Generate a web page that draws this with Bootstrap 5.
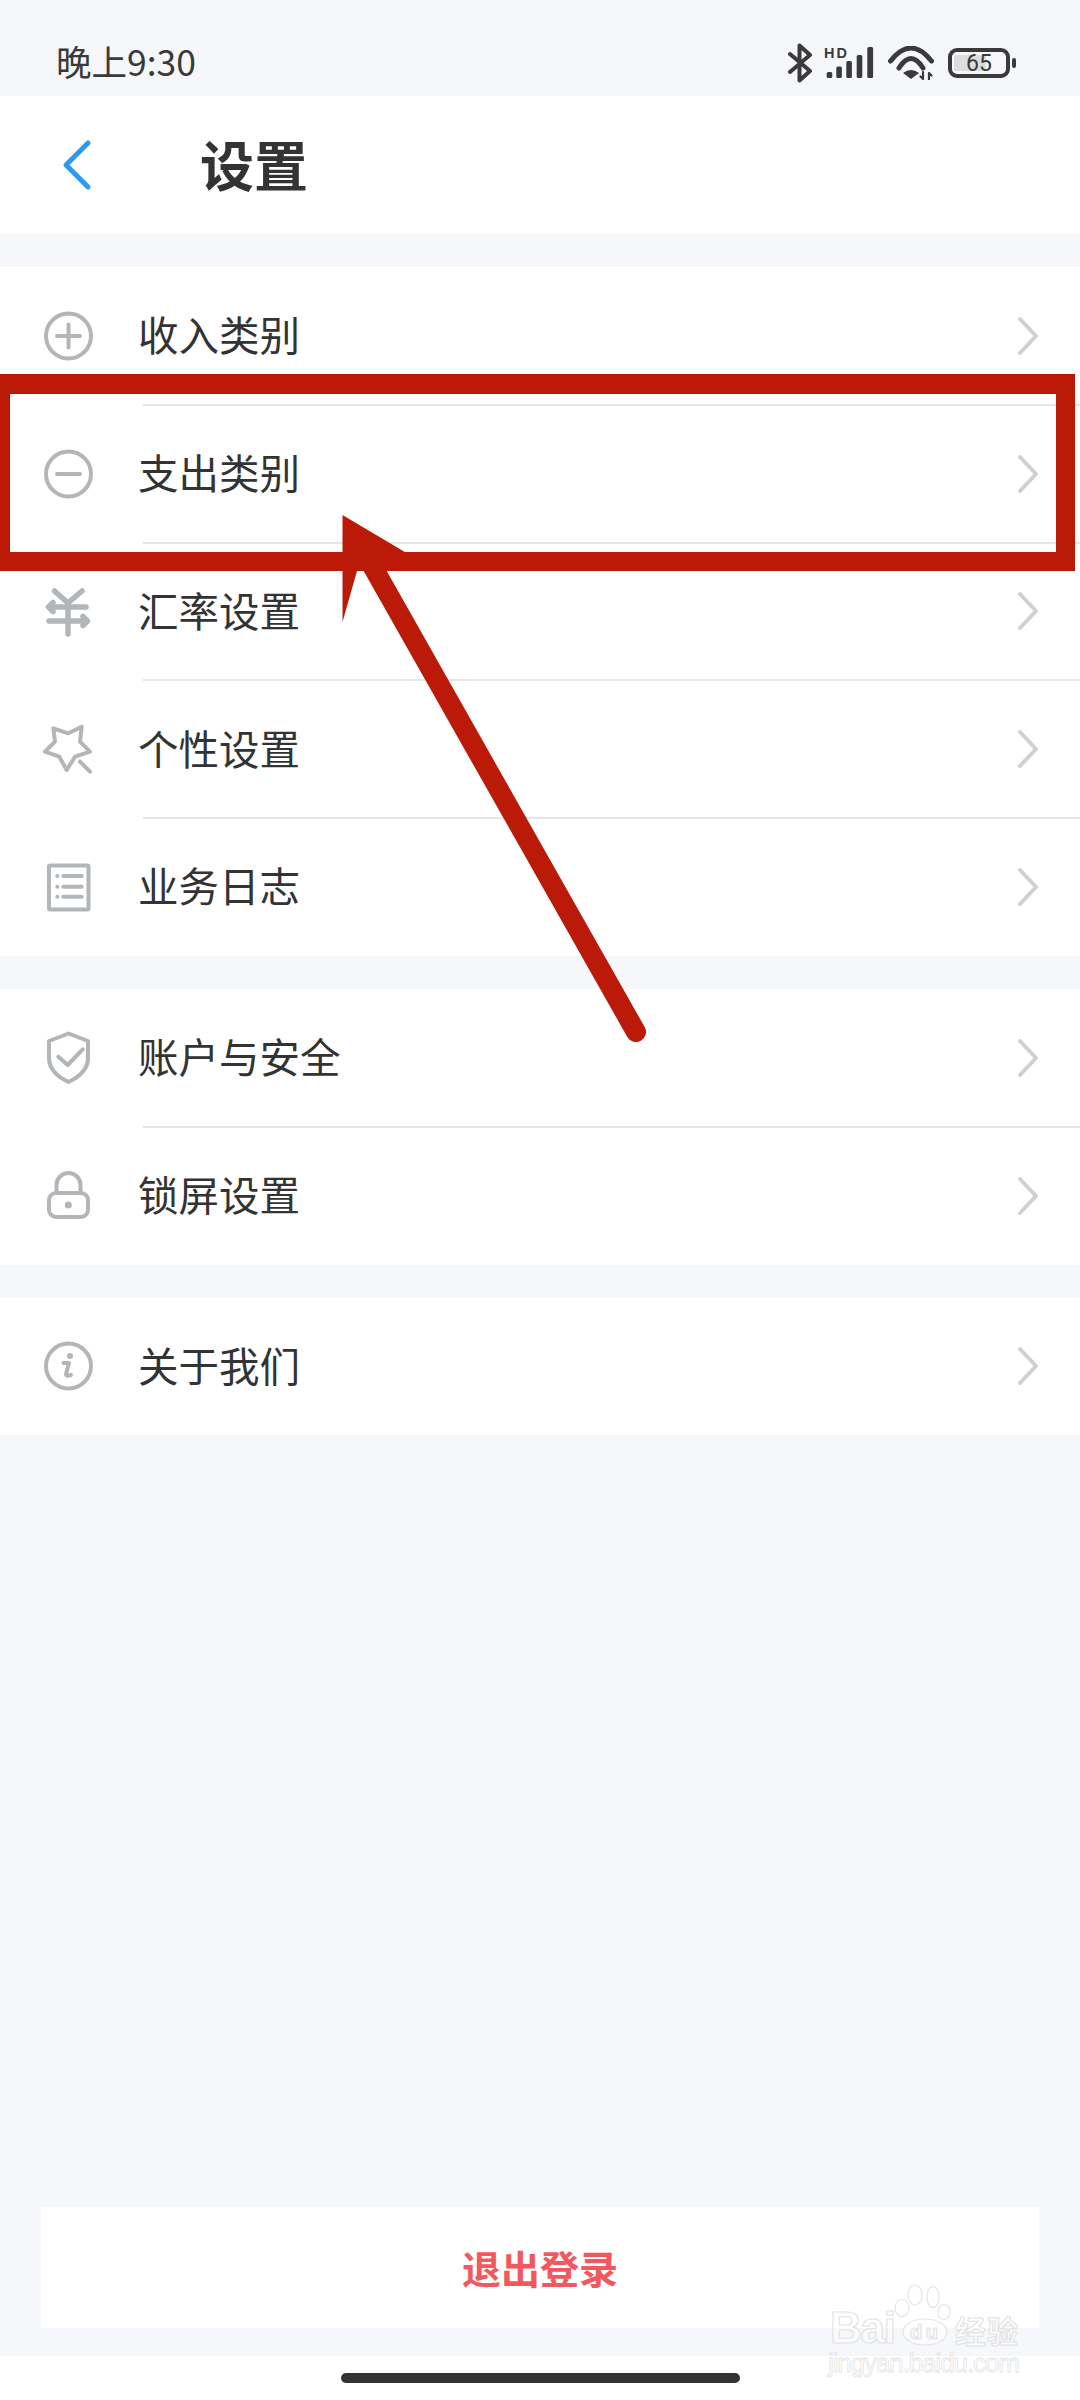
<!DOCTYPE html>
<html lang="zh-CN">
<head>
    <meta charset="UTF-8">
    <meta name="viewport" content="width=device-width, initial-scale=1.0">
    <title>设置</title>
    <link href="https://cdn.jsdelivr.net/npm/bootstrap@5.3.0/dist/css/bootstrap.min.css" rel="stylesheet">
    <style>
        html, body { margin: 0; width: 1080px; height: 2400px; overflow: hidden; background: #fff; }
        body { font-family: "Noto Sans CJK SC", "Noto Sans", sans-serif; color: #333; position: relative; }
        .screen-bg { height: 2356px; background: #f5f7fb; display: flex; flex-direction: column; }
        .status-row { height: 96px; padding: 30px 63px 0 56px; font-size: 35.5px; line-height: 1; color: #3a3a3a; }
        .status-time { flex-grow: 1; padding-bottom: 4px; }
        .status-row .sig { margin-left: 12px; }
        .status-row .wf { margin-left: 14px; }
        .status-row .bat { margin-left: 14px; }
        .head-row { height: 138px; padding-left: 60px; }
        .head-title { margin: 0 0 0 106px; font-size: 54px; font-weight: 700; line-height: 1; color: #333; padding-bottom: 2px; }
        .group-wrap { margin-top: 33px; background: #fff; }
        .group-wrap .list-group-item { height: 137.8px; padding: 0 39px 0 38px; border: 0; background: #fff; color: #333; font-size: 40.5px; line-height: 1; }
        .group-wrap .list-group-item + .list-group-item::before { content: ""; position: absolute; left: 143px; right: 0; top: -1px; height: 2px; background: #e6e6e6; }
        .row-icon { flex: none; width: 60px; height: 60px; margin-right: 40px; fill: none; stroke: #b2b6b9; stroke-width: 4; stroke-linecap: round; stroke-linejoin: round; }
        .row-go { flex: none; width: 26px; height: 40px; fill: none; stroke: #d0d0d0; stroke-width: 4; stroke-linecap: round; stroke-linejoin: round; }
        .row-name { flex-grow: 1; padding-bottom: 3px; }
        .logout-btn { display: block; width: 998px; height: 121px; margin: auto 41px 28px; padding: 0; border: 0; border-radius: 0; background: #fff; color: #f2595f; font-size: 39px; font-weight: 700; line-height: 1; }
        .home-bar { width: 399px; height: 10px; margin: 17px auto 0; border-radius: 5px; background: #333; }
        .mark-layer { position: absolute; left: 0; top: 0; width: 1080px; height: 2400px; pointer-events: none; }
        .wm-text { font-family: "Liberation Sans", "Noto Sans CJK SC", sans-serif; font-weight: 700; fill: #fff; fill-opacity: .6; stroke: #e4e4e4; stroke-width: 1.2; }
    </style>
</head>
<body>
    <div class="screen-bg">
        <div class="status-row d-flex align-items-center">
            <span class="status-time">晚上9:30</span>
            <svg width="24" height="40" viewBox="0 0 24 40" fill="none" stroke="#3a3a3a" stroke-width="4" stroke-linecap="round" stroke-linejoin="round"><path d="M2 11 22 28 11.5 37.5V2.5L22 12 2 29"/></svg>
            <svg class="sig" width="50" height="34" viewBox="0 0 50 34" fill="#3a3a3a">
                <text x="0" y="12" font-family="Liberation Sans, sans-serif" font-weight="700" font-size="14.5" textLength="23">HD</text>
                <rect x="2.7" y="26" width="5.6" height="6" rx="1.5"/>
                <rect x="12.3" y="20.5" width="5.6" height="11.5" rx="1.5"/>
                <rect x="22.3" y="15" width="5.6" height="17" rx="1.5"/>
                <rect x="32.7" y="9" width="5.6" height="23" rx="1.5"/>
                <rect x="43.3" y="1" width="5.8" height="31" rx="1.5"/>
            </svg>
            <svg class="wf" width="46" height="34" viewBox="0 0 46 34" fill="none" stroke="#3a3a3a" stroke-linecap="round">
                <path d="M2.5 15Q23-11 43.5 15" stroke-width="5"/>
                <path d="M11 22Q23 3 35 22" stroke-width="5"/>
                <path d="M15 27Q23 21 31 27L23 33Z" fill="#3a3a3a" stroke="none"/>
                <path d="M35 26V33M32.5 30.5 35 33M41 34V27M41 27 43.5 29.5" stroke-width="2.2"/>
            </svg>
            <svg class="bat" width="69" height="30" viewBox="0 0 69 30">
                <rect x="6" y="7" width="32" height="16" rx="2" fill="#dcdddf"/>
                <rect x="2" y="2" width="58" height="26" rx="7" fill="none" stroke="#3a3a3a" stroke-width="4"/>
                <rect x="64" y="10" width="4" height="10" rx="2" fill="#3a3a3a"/>
                <text x="31" y="23" text-anchor="middle" font-family="Roboto, sans-serif" font-size="23" fill="#3a3a3a">65</text>
            </svg>
        </div>

        <div class="head-row bg-white d-flex align-items-center">
            <svg width="34" height="54" viewBox="0 0 34 54" fill="none" stroke="#2a9bf1" stroke-width="5" stroke-linecap="round" stroke-linejoin="round"><path d="M28 5 6 27 28 49"/></svg>
            <h1 class="head-title">设置</h1>
        </div>

        <div class="group-wrap list-group list-group-flush rounded-0">
            <div class="list-group-item d-flex align-items-center">
                <svg class="row-icon" viewBox="0 0 60 60"><circle cx="30.5" cy="30" r="22.5"/><path d="M19 30H42M30.5 18.5V41.5"/></svg>
                <span class="row-name">收入类别</span>
                <svg class="row-go" viewBox="0 0 26 40"><path d="M5 3 21 20 5 37"/></svg>
            </div>
            <div class="list-group-item d-flex align-items-center">
                <svg class="row-icon" viewBox="0 0 60 60"><circle cx="30.5" cy="30" r="22.5"/><path d="M19 30H42"/></svg>
                <span class="row-name">支出类别</span>
                <svg class="row-go" viewBox="0 0 26 40"><path d="M5 3 21 20 5 37"/></svg>
            </div>
            <div class="list-group-item d-flex align-items-center">
                <svg class="row-icon" viewBox="0 0 60 60"><g stroke-width="5.5"><path d="M16.5 10 30 22 44 10M30 22V53M11 26H48M15 21.5 10.5 26 15 30.500M11 40H49M45 35.500 49.500 40 45 44.500"/></g></svg>
                <span class="row-name">汇率设置</span>
                <svg class="row-go" viewBox="0 0 26 40"><path d="M5 3 21 20 5 37"/></svg>
            </div>
            <div class="list-group-item d-flex align-items-center">
                <svg class="row-icon" viewBox="0 0 60 60"><path d="M15.300 9.300 30.300 14.300 43.700 7.700 42 22.700 52 32.700 37 37.700 28.700 51 21.300 37.700 7 32.700 17 22.700ZM42 42.700 52 52.700"/></svg>
                <span class="row-name">个性设置</span>
                <svg class="row-go" viewBox="0 0 26 40"><path d="M5 3 21 20 5 37"/></svg>
            </div>
            <div class="list-group-item d-flex align-items-center">
                <svg class="row-icon" viewBox="0 0 60 60"><rect x="11" y="8.500" width="39.500" height="44" rx="1"/><path d="M19.300 19H19.400M25.300 19H43.700M19.300 29.700H19.400M25.300 29.700H43.700M19.300 39.700H19.400M25.300 39.700H43.700"/></svg>
                <span class="row-name">业务日志</span>
                <svg class="row-go" viewBox="0 0 26 40"><path d="M5 3 21 20 5 37"/></svg>
            </div>
        </div>

        <div class="group-wrap list-group list-group-flush rounded-0">
            <div class="list-group-item d-flex align-items-center">
                <svg class="row-icon" viewBox="0 0 60 60"><path d="M30.500 5.500 11 13V30C11 41 20 49 30.500 54 41 49 50 41 50 30V13ZM20.300 28.700 29.700 37 44.700 21.300"/></svg>
                <span class="row-name">账户与安全</span>
                <svg class="row-go" viewBox="0 0 26 40"><path d="M5 3 21 20 5 37"/></svg>
            </div>
            <div class="list-group-item d-flex align-items-center">
                <svg class="row-icon" viewBox="0 0 60 60"><rect x="11" y="27" width="39" height="24" rx="7"/><path d="M18.500 27V19a12 12 0 0 1 24 0V27"/><circle cx="30.300" cy="39" r="3.500" fill="#b2b6b9" stroke="none"/></svg>
                <span class="row-name">锁屏设置</span>
                <svg class="row-go" viewBox="0 0 26 40"><path d="M5 3 21 20 5 37"/></svg>
            </div>
        </div>

        <div class="group-wrap list-group list-group-flush rounded-0">
            <div class="list-group-item d-flex align-items-center">
                <svg class="row-icon" viewBox="0 0 60 60"><circle cx="30.500" cy="30" r="22.500"/><circle cx="32" cy="20" r="3" fill="#b2b6b9" stroke="none"/><path d="M25.500 27H31L28.200 37.500Q27.600 40 30 39.700L33 39"/></svg>
                <span class="row-name">关于我们</span>
                <svg class="row-go" viewBox="0 0 26 40"><path d="M5 3 21 20 5 37"/></svg>
            </div>
        </div>

        <button type="button" class="logout-btn btn">退出登录</button>
    </div>
    <div class="home-bar"></div>

    <!-- 标注层：红框、箭头、水印 -->
    <svg class="mark-layer" viewBox="0 0 1080 2400">
        <path d="M-20 374H1075V571H-20ZM10 394V552H1056V394Z" fill="#bb1a09" fill-rule="evenodd"/>
        <path d="M342.500 515 420 561 375 565 357 571 342.500 622Z" fill="#bb1a09"/>
        <line x1="636" y1="1032" x2="365" y2="553" stroke="#bb1a09" stroke-width="20" stroke-linecap="round"/>
    </svg>
    <svg class="mark-layer" viewBox="0 0 1080 2400">
        <g fill="#fff" fill-opacity=".6" stroke="#e4e4e4" stroke-width="1.200">
            <ellipse cx="915" cy="2295" rx="7" ry="10"/>
            <ellipse cx="933" cy="2297" rx="6" ry="10.500"/>
            <ellipse cx="902" cy="2308" rx="7" ry="8.500"/>
            <ellipse cx="944" cy="2312" rx="6" ry="7.500"/>
            <ellipse cx="925" cy="2332" rx="22" ry="13"/>
        </g>
        <text class="wm-text" x="830" y="2343" font-size="44" textLength="66">Bai</text>
        <text class="wm-text" x="910" y="2339" font-size="20" textLength="28">du</text>
        <text class="wm-text" x="955" y="2343" font-size="31" textLength="63" style="font-family: 'Noto Sans CJK SC', sans-serif">经验</text>
        <text class="wm-text" x="828" y="2372" font-size="26" textLength="192" style="font-weight: 400; stroke-width: .8">jingyan.baidu.com</text>
    </svg>
    <script src="https://cdn.jsdelivr.net/npm/bootstrap@5.3.0/dist/js/bootstrap.bundle.min.js"></script>
</body>
</html>
